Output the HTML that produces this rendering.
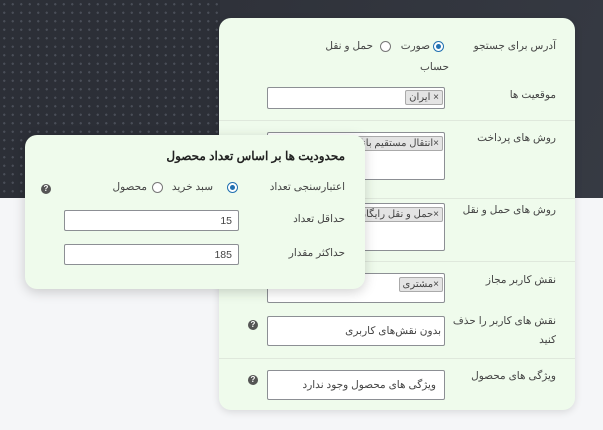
<!DOCTYPE html>
<html><head><meta charset="utf-8"><style>
*{box-sizing:border-box;margin:0;padding:0}
body{width:603px;height:430px;overflow:hidden;position:relative;background:#f5f6f8;font-family:"Liberation Sans","Noto Sans CJK SC",sans-serif;font-size:10.5px;color:#444;direction:rtl}
.dark{position:absolute;left:0;top:0;width:603px;height:198px;background:#2c2f37;
background-image:radial-gradient(circle,#4a4e58 1px,transparent 1.3px);background-size:8.5px 8.5px}
.dark2{position:absolute;left:220px;top:0;width:383px;height:198px;background:linear-gradient(110deg,#2f323a,#363a43)}
.card{position:absolute;left:219px;top:18px;width:356px;height:392px;background:#effbec;border-radius:12px;box-shadow:0 2px 8px rgba(0,0,0,.12)}
.pop{position:absolute;left:25px;top:135px;width:340px;height:154px;background:#effbec;border-radius:12px;box-shadow:0 3px 12px rgba(0,0,0,.18)}
.t{position:absolute;white-space:nowrap}
.in{position:absolute;background:#fff;border:1px solid #8c8f94;border-radius:2px}
.tag{position:absolute;background:#e4e4e4;border:1px solid #aaa;border-radius:2px;font-size:10px;padding:1px 3px;color:#444;white-space:nowrap;overflow:hidden}
.sep{position:absolute;left:0;width:356px;height:1px;background:#dfe8dc}
.rad{position:absolute;width:11px;height:11px;border:1px solid #777;border-radius:50%;background:#fff}
.rad.on::after{content:"";position:absolute;left:2px;top:2px;width:5px;height:5px;border-radius:50%;background:#2271b1}
.rad.on{border-color:#2271b1}
.help{position:absolute;width:10px;height:10px;border-radius:50%;background:#555;color:#fff;font-size:8px;font-weight:bold;text-align:center;line-height:10px;direction:ltr}
</style></head><body>
<div class="dark"></div><div class="dark2"></div>
<div class="card">
<div class="t" style="right:19px;top:22px">آدرس برای جستجو</div>
<div class="rad on" style="left:214px;top:23px"></div>
<div class="t" style="right:145px;top:22px">صورت</div>
<div class="t" style="right:126px;top:43px">حساب</div>
<div class="rad" style="left:161px;top:23px"></div>
<div class="t" style="right:202px;top:22px">حمل و نقل</div>
<div class="t" style="right:19px;top:71px">موقعیت ها</div>
<div class="in" style="left:48px;top:69px;width:178px;height:22px"><div class="tag" style="right:1px;top:2px">× ایران</div></div>
<div class="sep" style="top:102px"></div>
<div class="t" style="right:19px;top:114px">روش های پرداخت</div>
<div class="in" style="left:48px;top:114px;width:178px;height:48px"><div class="tag" style="right:1px;top:3px;width:130px">×انتقال مستقیم بانکی</div></div>
<div class="sep" style="top:180px"></div>
<div class="t" style="right:19px;top:186px">روش های حمل و نقل</div>
<div class="in" style="left:48px;top:185px;width:178px;height:48px"><div class="tag" style="right:1px;top:3px;width:130px">×حمل و نقل رایگان</div></div>
<div class="sep" style="top:243px"></div>
<div class="t" style="right:19px;top:256px">نقش کاربر مجاز</div>
<div class="in" style="left:48px;top:255px;width:178px;height:30px"><div class="tag" style="right:1px;top:3px">×مشتری</div></div>
<div class="t" style="right:19px;top:297px">نقش های کاربر را حذف</div>
<div class="t" style="right:19px;top:316px">کنید</div>
<div class="in" style="left:48px;top:298px;width:178px;height:30px"><div class="t" style="right:3px;top:8px">بدون نقش‌های کاربری</div></div>
<div class="help" style="left:29px;top:302px">?</div>
<div class="sep" style="top:340px"></div>
<div class="t" style="right:19px;top:352px">ویژگی های محصول</div>
<div class="in" style="left:48px;top:352px;width:178px;height:30px"><div class="t" style="right:8px;top:8px">ویژگی های محصول وجود ندارد</div></div>
<div class="help" style="left:29px;top:357px">?</div>
</div>
<div class="pop">
<div class="t" style="right:20px;top:14px;font-size:12px;font-weight:bold;color:#222">محدودیت ها بر اساس تعداد محصول</div>
<div class="t" style="right:20px;top:46px">اعتبارسنجی تعداد</div>
<div class="rad on" style="left:202px;top:47px"></div>
<div class="t" style="right:152px;top:46px">سبد خرید</div>
<div class="rad" style="left:127px;top:47px"></div>
<div class="t" style="right:218px;top:46px">محصول</div>
<div class="help" style="left:16px;top:49px">?</div>
<div class="t" style="right:20px;top:78px">حداقل تعداد</div>
<div class="in" style="left:39px;top:75px;width:175px;height:21px"><div class="t" style="right:6px;top:4px">15</div></div>
<div class="t" style="right:20px;top:112px">حداکثر مقدار</div>
<div class="in" style="left:39px;top:109px;width:175px;height:21px"><div class="t" style="right:6px;top:4px">185</div></div>
</div>
</body></html>
